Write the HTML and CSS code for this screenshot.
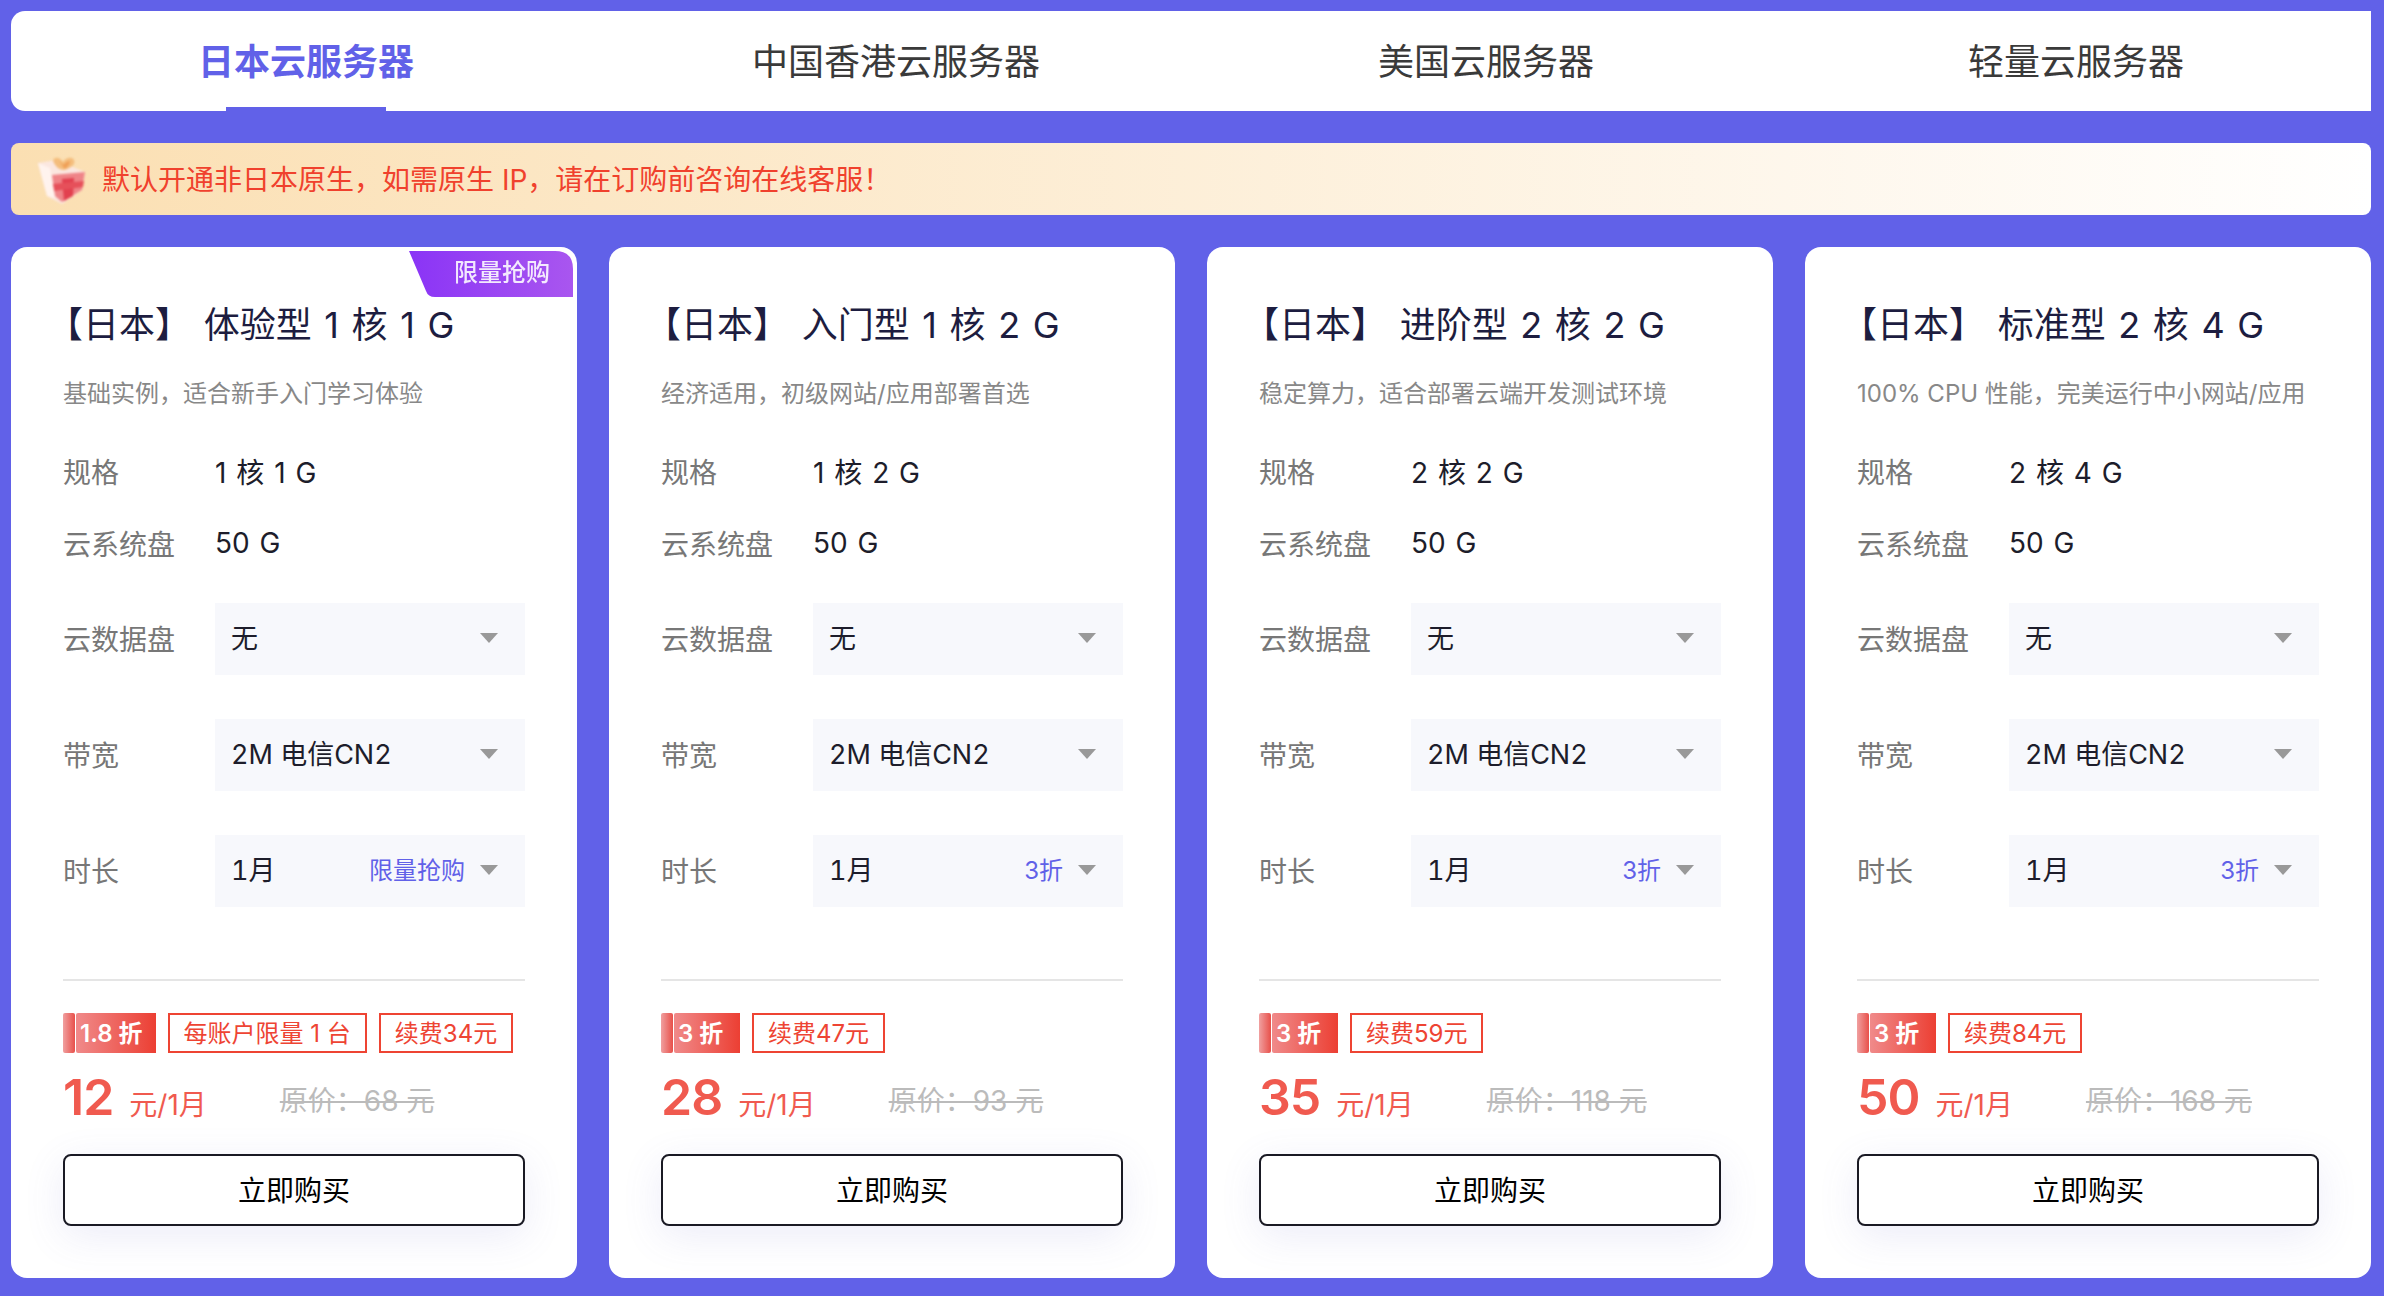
FILE: index.html
```html
<!DOCTYPE html>
<html lang="zh-CN">
<head>
<meta charset="utf-8">
<title>云服务器</title>
<link rel="stylesheet" href="styles.css">
</head>
<body>
<main class="page">
  <nav class="tabs">
    <a class="tab active">日本云服务器</a>
    <a class="tab">中国香港云服务器</a>
    <a class="tab">美国云服务器</a>
    <a class="tab">轻量云服务器</a>
  </nav>
  <div class="notice">
    <svg class="gift" viewBox="0 0 50 50">
      <path d="M1 9 19 6 48 18 45 36 25 50 10 42z" fill="#fbe7e0"/>
      <path d="M16 7c1-5 7-4 10 1 2-4 9-6 11-2 2 5-5 9-10 10-5 0-9-4-11-9z" fill="#f4bd7c"/>
      <path d="M23 7c1 3 3 6 5 8 3-3 5-5 5-8-3 0-6 3-7 4-1-2-2-3-3-4z" fill="#efa058"/>
      <path d="M15 21 48 18 45 36 25 48 18 42z" fill="#ef8488"/>
      <path d="M25 25 37 24 36 42 27 47z" fill="#e2404f"/>
      <path d="M16 30 47 27 46 33 17 37z" fill="#e6505a"/>
      <path d="M1 9 13 14 18 44 10 42z" fill="#fff3ee"/>
    </svg>
    <span class="notice-text">默认开通非日本原生&#xFF0C;如需原生 IP&#xFF0C;请在订购前咨询在线客服&#xFF01;</span>
  </div>
  <section class="cards">

    <article class="card">
      <div class="ribbon">
        <svg class="ribbon-bg" viewBox="0 0 164 46" preserveAspectRatio="none">
          <defs><linearGradient id="rib" x1="0" y1="0" x2="1" y2="0"><stop offset="0" stop-color="#8a34f6"/><stop offset="1" stop-color="#a956ef"/></linearGradient></defs>
          <path d="M0 0H146Q164 0 164 18V46H26Q19 46 17 40z" fill="url(#rib)"/>
        </svg>
        <span class="ribbon-text">限量抢购</span>
      </div>
      <h2 class="title"><span class="lb">【</span>日本】 体验型 1 核 1 G</h2>
      <p class="desc">基础实例&#xFF0C;适合新手入门学习体验</p>
      <div class="row"><span class="label">规格</span><span class="value">1 核 1 G</span></div>
      <div class="row"><span class="label">云系统盘</span><span class="value">50 G</span></div>
      <div class="row-select first"><span class="label">云数据盘</span><div class="select"><span class="sel-text">无</span><i class="caret"></i></div></div>
      <div class="row-select"><span class="label">带宽</span><div class="select"><span class="sel-text">2M 电信CN2</span><i class="caret"></i></div></div>
      <div class="row-select"><span class="label">时长</span><div class="select"><span class="sel-text">1月</span><span class="sel-hint">限量抢购</span><i class="caret"></i></div></div>
      <hr class="divider">
      <div class="tags"><span class="discount"><i class="stub"></i><b>1.8 折</b></span><span class="tag">每账户限量 1 台</span><span class="tag">续费34元</span></div>
      <div class="price"><span class="num">12</span><span class="unit">元/1月</span><s class="orig">原价&#xFF1A;68 元</s></div>
      <button class="buy">立即购买</button>
    </article>

    <article class="card">
      <h2 class="title"><span class="lb">【</span>日本】 入门型 1 核 2 G</h2>
      <p class="desc">经济适用&#xFF0C;初级网站/应用部署首选</p>
      <div class="row"><span class="label">规格</span><span class="value">1 核 2 G</span></div>
      <div class="row"><span class="label">云系统盘</span><span class="value">50 G</span></div>
      <div class="row-select first"><span class="label">云数据盘</span><div class="select"><span class="sel-text">无</span><i class="caret"></i></div></div>
      <div class="row-select"><span class="label">带宽</span><div class="select"><span class="sel-text">2M 电信CN2</span><i class="caret"></i></div></div>
      <div class="row-select"><span class="label">时长</span><div class="select"><span class="sel-text">1月</span><span class="sel-hint">3折</span><i class="caret"></i></div></div>
      <hr class="divider">
      <div class="tags"><span class="discount"><i class="stub"></i><b>3 折</b></span><span class="tag">续费47元</span></div>
      <div class="price"><span class="num">28</span><span class="unit">元/1月</span><s class="orig">原价&#xFF1A;93 元</s></div>
      <button class="buy">立即购买</button>
    </article>

    <article class="card">
      <h2 class="title"><span class="lb">【</span>日本】 进阶型 2 核 2 G</h2>
      <p class="desc">稳定算力&#xFF0C;适合部署云端开发测试环境</p>
      <div class="row"><span class="label">规格</span><span class="value">2 核 2 G</span></div>
      <div class="row"><span class="label">云系统盘</span><span class="value">50 G</span></div>
      <div class="row-select first"><span class="label">云数据盘</span><div class="select"><span class="sel-text">无</span><i class="caret"></i></div></div>
      <div class="row-select"><span class="label">带宽</span><div class="select"><span class="sel-text">2M 电信CN2</span><i class="caret"></i></div></div>
      <div class="row-select"><span class="label">时长</span><div class="select"><span class="sel-text">1月</span><span class="sel-hint">3折</span><i class="caret"></i></div></div>
      <hr class="divider">
      <div class="tags"><span class="discount"><i class="stub"></i><b>3 折</b></span><span class="tag">续费59元</span></div>
      <div class="price"><span class="num">35</span><span class="unit">元/1月</span><s class="orig">原价&#xFF1A;118 元</s></div>
      <button class="buy">立即购买</button>
    </article>

    <article class="card">
      <h2 class="title"><span class="lb">【</span>日本】 标准型 2 核 4 G</h2>
      <p class="desc">100% CPU 性能&#xFF0C;完美运行中小网站/应用</p>
      <div class="row"><span class="label">规格</span><span class="value">2 核 4 G</span></div>
      <div class="row"><span class="label">云系统盘</span><span class="value">50 G</span></div>
      <div class="row-select first"><span class="label">云数据盘</span><div class="select"><span class="sel-text">无</span><i class="caret"></i></div></div>
      <div class="row-select"><span class="label">带宽</span><div class="select"><span class="sel-text">2M 电信CN2</span><i class="caret"></i></div></div>
      <div class="row-select"><span class="label">时长</span><div class="select"><span class="sel-text">1月</span><span class="sel-hint">3折</span><i class="caret"></i></div></div>
      <hr class="divider">
      <div class="tags"><span class="discount"><i class="stub"></i><b>3 折</b></span><span class="tag">续费84元</span></div>
      <div class="price"><span class="num">50</span><span class="unit">元/1月</span><s class="orig">原价&#xFF1A;168 元</s></div>
      <button class="buy">立即购买</button>
    </article>

  </section>
</main>
</body>
</html>
```

FILE: styles.css
```css
* { box-sizing: border-box; }
html, body { margin: 0; padding: 0; }
body {
  width: 2384px;
  height: 1296px;
  overflow: hidden;
  background: #6161e8;
  font-family: "Inter", "Noto Sans CJK SC", sans-serif;
  color: #1d1d2b;
}
.page { padding: 11px 13px 18px 11px; }

.tabs {
  display: grid;
  grid-template-columns: repeat(4, 1fr);
  height: 100px;
  background: #fff;
  border-radius: 14px 0 0 14px;
  margin-bottom: 32px;
}
.tab {
  position: relative;
  display: flex;
  align-items: center;
  justify-content: center;
  padding-bottom: 4px;
  font-size: 36px;
  color: #3a3a3a;
}
.tab.active { color: #6161e8; font-weight: 600; }
.tab.active::after {
  content: "";
  position: absolute;
  left: 215px;
  bottom: 0;
  width: 160px;
  height: 4px;
  background: #6161e8;
}

.notice {
  display: flex;
  align-items: center;
  height: 72px;
  margin-bottom: 32px;
  padding-left: 26px;
  border-radius: 8px;
  background: linear-gradient(90deg, #fbdfb2 0%, #fff 100%);
}
.gift { width: 50px; height: 50px; margin-right: 15px; filter: blur(1.1px); }
.notice-text { padding-bottom: 2px; font-size: 28px; color: #f0412d; }

.cards {
  display: grid;
  grid-template-columns: repeat(4, 566px);
  gap: 32px;
}
.card {
  position: relative;
  height: 1031px;
  padding: 54px 52px 0;
  background: #fff;
  border-radius: 16px;
}
.ribbon {
  position: absolute;
  top: 4px;
  right: 4px;
  width: 164px;
  height: 46px;
  display: flex;
  align-items: center;
  justify-content: flex-end;
  padding: 0 23px 8px 0;
}
.ribbon-bg { position: absolute; inset: 0; width: 100%; height: 100%; }
.ribbon-text {
  position: relative;
  font-size: 24px;
  font-weight: 500;
  color: rgba(255, 255, 255, .88);
  filter: blur(.7px);
}
.title {
  margin: 0;
  font-size: 36px;
  font-weight: 400;
  line-height: 48px;
  word-spacing: 2.5px;
  color: #1d1d40;
}
.lb { margin-left: -16px; }
.desc {
  margin: 27px 0 25px;
  font-size: 24px;
  line-height: 36px;
  color: #888;
}
.row, .row-select {
  display: flex;
  align-items: center;
  font-size: 28px;
}
.row { height: 72px; padding-bottom: 4px; }
.row-select { margin-top: 44px; }
.row-select .label { padding-bottom: 2px; }
.row-select.first { margin-top: 22px; }
.label { width: 152px; color: #777; }
.value { color: #1d1d2b; word-spacing: 2px; }
.select {
  flex: 1;
  display: flex;
  align-items: center;
  height: 72px;
  padding: 0 27px 5px 16px;
  font-size: 27px;
  background: #f7f8fc;
}
.sel-text { flex: 1; color: #1d1d2b; font-variant-numeric: tabular-nums; }
.sel-hint { font-size: 24px; color: #6161e8; margin-right: 15px; }
.caret {
  width: 0;
  height: 0;
  margin-top: 3px;
  border-left: 9px solid transparent;
  border-right: 9px solid transparent;
  border-top: 10px solid #999;
}
.divider {
  height: 2px;
  margin: 72px 0 32px;
  border: 0;
  background: #e5e5e5;
}
.tags { display: flex; gap: 12px; height: 40px; }
.discount { display: flex; }
.stub {
  width: 12px;
  margin-right: 1px;
  border-radius: 2px;
  background: linear-gradient(90deg, #f0a0a0, #e8504a);
}
.discount b {
  display: flex;
  align-items: center;
  min-width: 66px;
  padding: 0 13px 4px 4px;
  font-size: 24px;
  font-weight: 600;
  color: #fff;
  background: linear-gradient(90deg, #f08a8a, #ec3f33);
  border-radius: 2px 0 0 2px;
}
.tag {
  display: flex;
  align-items: center;
  padding: 0 14px 4px;
  font-size: 24px;
  color: #ee4433;
  border: 2px solid #ee4433;
}
.price {
  display: flex;
  align-items: baseline;
  height: 72px;
  margin-top: 8px;
  line-height: 72px;
}
.num { font-size: 50px; font-weight: 600; letter-spacing: -1px; color: #f05a4f; }
.unit { margin-left: 16px; font-size: 28px; color: #f05a4f; }
.orig { align-self: flex-start; margin-left: 73px; font-size: 28px; line-height: 81px; color: #bbb; }
.buy {
  display: block;
  width: 100%;
  height: 72px;
  margin-top: 21px;
  padding-bottom: 3px;
  background: #fff;
  border: 2px solid #1a1a24;
  border-radius: 8px;
  font: inherit;
  font-size: 28px;
  color: #000;
  box-shadow: 0 10px 40px rgba(100, 100, 200, .12);
}
```
